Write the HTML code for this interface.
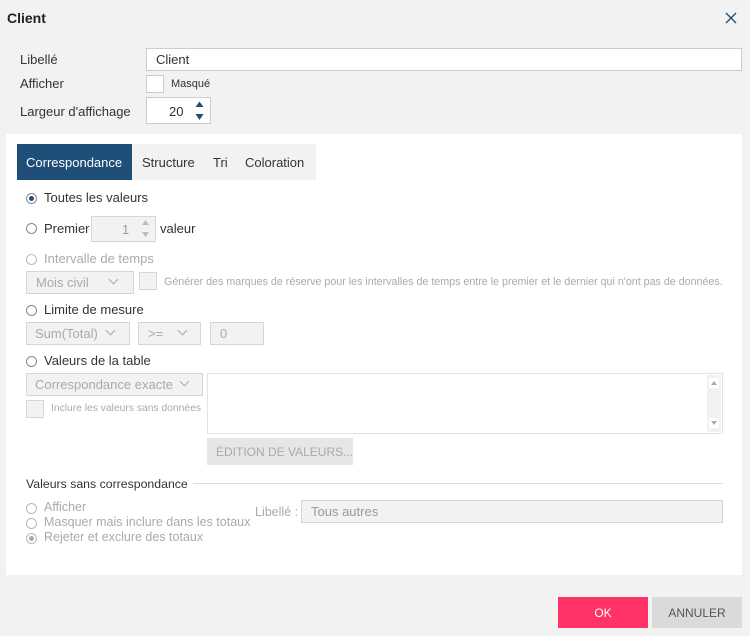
<!DOCTYPE html><html><head><meta charset="utf-8"><style>
*{box-sizing:border-box}
body{margin:0;width:750px;height:636px;background:#f2f2f2;font-family:"Liberation Sans",sans-serif;font-size:13px;color:#333;position:relative;overflow:hidden}
.a{position:absolute;white-space:nowrap}
.box{position:absolute;border:1px solid #ccc;background:#fff}
.dis{position:absolute;border:1px solid #d6d6d6;background:#f2f2f2;color:#aaa}
.g{color:#aaa}
.rad{position:absolute;width:11px;height:11px;border:1px solid #888;border-radius:50%;background:#fff}
.rad.d{border-color:#bbb}
.rad.on::after{content:"";position:absolute;left:2px;top:2px;width:5px;height:5px;border-radius:50%;background:#1f4e79}
.rad.d.on::after{background:#aaa}
.chev{position:absolute;width:7px;height:7px;border-right:1px solid #aaa;border-bottom:1px solid #aaa;transform:rotate(45deg)}
</style></head><body>
<div class="a" style="left:7px;top:10px;font-weight:bold;font-size:14px;color:#222">Client</div>
<svg class="a" style="left:725px;top:12px" width="12" height="12"><path d="M1 1L11 11M11 1L1 11" stroke="#1f4e79" stroke-width="1.4"/></svg>
<div class="a" style="left:20px;top:52px">Libellé</div>
<div class="box" style="left:146px;top:48px;width:596px;height:23px;padding:3px 9px">Client</div>
<div class="a" style="left:20px;top:76px">Afficher</div>
<div class="box" style="left:146px;top:75px;width:18px;height:18px"></div>
<div class="a" style="left:171px;top:78px;font-size:11px">Masqué</div>
<div class="a" style="left:20px;top:104px">Largeur d'affichage</div>
<div class="box" style="left:146px;top:97px;width:65px;height:27px;padding:6px 0 0 22px">20</div>
<svg class="a" style="left:195px;top:101px" width="9" height="20"><path d="M0.5 6L4.5 0.5L8.5 6Z M0.5 13L4.5 19L8.5 13Z" fill="#1f4e79"/></svg>
<div class="a" style="left:6px;top:134px;width:736px;height:441px;background:#fff"></div>
<div class="a" style="left:17px;top:144px;width:299px;height:36px;background:#f2f2f2"></div>
<div class="a" style="left:17px;top:144px;width:115px;height:36px;background:#1f4e79;color:#fff;padding:11px 0 0 9px">Correspondance</div>
<div class="a" style="left:142px;top:155px">Structure</div>
<div class="a" style="left:213px;top:155px">Tri</div>
<div class="a" style="left:245px;top:155px">Coloration</div>
<div class="rad on" style="left:26px;top:193px"></div><div class="a" style="left:44px;top:190px">Toutes les valeurs</div>
<div class="rad" style="left:26px;top:223px"></div><div class="a" style="left:44px;top:221px">Premier</div>
<div class="dis" style="left:91px;top:216px;width:65px;height:26px;padding:5px 0 0 30px;color:#999">1</div>
<svg class="a" style="left:141px;top:219px" width="9" height="20"><path d="M1 6L4.5 1L8 6Z M1 13L4.5 18L8 13Z" fill="#bbb"/></svg>
<div class="a" style="left:160px;top:221px">valeur</div>
<div class="rad d" style="left:26px;top:254px"></div><div class="a g" style="left:44px;top:251px">Intervalle de temps</div>
<div class="dis" style="left:26px;top:271px;width:108px;height:23px;padding:3px 9px">Mois civil</div><div class="chev" style="left:110px;top:276px"></div>
<div class="dis" style="left:139px;top:272px;width:18px;height:18px"></div>
<div class="a g" style="left:164px;top:276px;font-size:10.7px">Générer des marques de réserve pour les intervalles de temps entre le premier et le dernier qui n'ont pas de données.</div>
<div class="rad" style="left:26px;top:305px"></div><div class="a" style="left:44px;top:302px">Limite de mesure</div>
<div class="dis" style="left:26px;top:322px;width:104px;height:23px;padding:3px 8px">Sum(Total)</div><div class="chev" style="left:107px;top:327px"></div>
<div class="dis" style="left:138px;top:322px;width:63px;height:23px;padding:3px 9px">&gt;=</div><div class="chev" style="left:179px;top:327px"></div>
<div class="dis" style="left:210px;top:322px;width:54px;height:23px;padding:3px 9px">0</div>
<div class="rad" style="left:26px;top:356px"></div><div class="a" style="left:44px;top:353px">Valeurs de la table</div>
<div class="dis" style="left:26px;top:373px;width:177px;height:23px;padding:3px 8px">Correspondance exacte</div><div class="chev" style="left:181px;top:378px"></div>
<div class="dis" style="left:26px;top:400px;width:18px;height:18px"></div>
<div class="a g" style="left:51px;top:403px;font-size:10.3px">Inclure les valeurs sans données</div>
<div class="a" style="left:207px;top:373px;width:516px;height:61px;border:1px solid #e3e3e3;background:#fff"></div>
<div class="a" style="left:707px;top:375px;width:14px;height:57px;background:#f2f2f2"></div>
<svg class="a" style="left:709px;top:378px" width="10" height="52"><rect x="0" y="0" width="10" height="10" fill="#fff"/><path d="M2 7L5 3L8 7Z" fill="#aaa"/><rect x="0" y="40" width="10" height="10" fill="#fff"/><path d="M2 43L5 47L8 43Z" fill="#aaa"/></svg>
<div class="a" style="left:207px;top:438px;width:146px;height:27px;background:#e6e6e6;color:#aaa;padding:7px 0 0 9px;font-size:12px">ÉDITION DE VALEURS...</div>
<div class="a" style="left:26px;top:477px;font-size:12.3px">Valeurs sans correspondance</div>
<div class="a" style="left:193px;top:483px;width:530px;height:1px;background:#ddd"></div>
<div class="rad d" style="left:26px;top:503px"></div><div class="a g" style="left:44px;top:500px;font-size:12.5px">Afficher</div>
<div class="rad d" style="left:26px;top:518px"></div><div class="a g" style="left:44px;top:515px;font-size:12.5px">Masquer mais inclure dans les totaux</div>
<div class="rad d on" style="left:26px;top:533px"></div><div class="a g" style="left:44px;top:530px;font-size:12.5px">Rejeter et exclure des totaux</div>
<div class="a g" style="left:255px;top:505px;font-size:12.5px">Libellé :</div>
<div class="dis" style="left:301px;top:500px;width:422px;height:23px;padding:3px 9px;color:#999">Tous autres</div>
<div class="a" style="left:558px;top:597px;width:90px;height:31px;background:#ff3366;color:#fff;text-align:center;padding-top:9px;font-size:12px">OK</div>
<div class="a" style="left:652px;top:597px;width:90px;height:31px;background:#dadada;color:#555;text-align:center;padding-top:9px;font-size:12px">ANNULER</div>
</body></html>
